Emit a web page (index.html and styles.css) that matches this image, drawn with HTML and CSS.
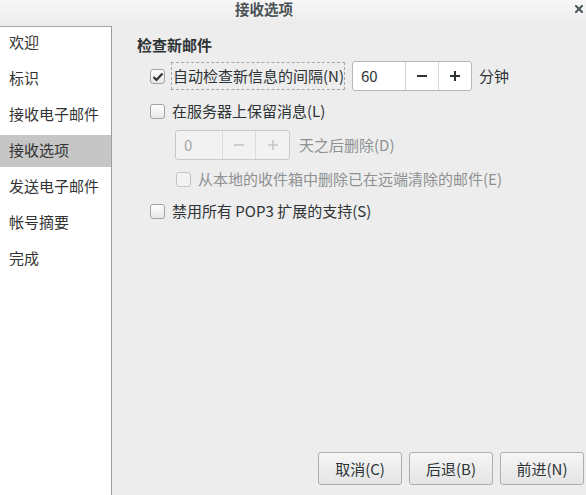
FILE: index.html
```html
<!DOCTYPE html>
<html lang="zh-CN">
<head>
<meta charset="utf-8">
<link rel="stylesheet" href="styles.css">
</head>
<body>
<div class="window">
  <div class="titlebar">
    <div class="title">接收选项</div>
    <svg class="close" width="8" height="8" viewBox="0 0 8 8"><path d="M1 1 L7 7 M7 1 L1 7" stroke="#4f5b5f" stroke-width="2.2" stroke-linecap="square"/></svg>
  </div>
  <div class="body">
    <div class="sidebar">
      <div class="item">欢迎</div>
      <div class="item">标识</div>
      <div class="item">接收电子邮件</div>
      <div class="item selected">接收选项</div>
      <div class="item">发送电子邮件</div>
      <div class="item">帐号摘要</div>
      <div class="item">完成</div>
    </div>
    <div class="main">
      <div class="content">
        <div class="heading">检查新邮件</div>
        <div class="row row1">
          <span class="check checked"><svg width="12" height="10" viewBox="0 0 12 10"><path d="M1.5 5 L4.5 8 L10.5 1.5" fill="none" stroke="#2e3436" stroke-width="2.2"/></svg></span>
          <span class="label focus">自动检查新信息的间隔(N)</span>
          <div class="spin">
            <div class="entry">60</div>
            <div class="sbtn"><svg width="12" height="12" viewBox="0 0 12 12"><path d="M1 6 H11" stroke="#2e3436" stroke-width="2"/></svg></div>
            <div class="sbtn"><svg width="12" height="12" viewBox="0 0 12 12"><path d="M1 6 H11 M6 1 V11" stroke="#2e3436" stroke-width="2"/></svg></div>
          </div>
          <span class="unit">分钟</span>
        </div>
        <div class="row row2">
          <span class="check"></span>
          <span class="label">在服务器上保留消息(L)</span>
        </div>
        <div class="row row3">
          <div class="spin disabled">
            <div class="entry">0</div>
            <div class="sbtn"><svg width="12" height="12" viewBox="0 0 12 12"><path d="M1 6 H11" stroke="#c4c6c6" stroke-width="1.6"/></svg></div>
            <div class="sbtn"><svg width="12" height="12" viewBox="0 0 12 12"><path d="M1 6 H11 M6 1 V11" stroke="#c4c6c6" stroke-width="1.6"/></svg></div>
          </div>
          <span class="unit dim">天之后删除(D)</span>
        </div>
        <div class="row row4">
          <span class="check dis"></span>
          <span class="label dim">从本地的收件箱中删除已在远端清除的邮件(E)</span>
        </div>
        <div class="row row5">
          <span class="check"></span>
          <span class="label">禁用所有 POP3 扩展的支持(S)</span>
        </div>
      </div>
      <div class="buttons">
        <button class="btn">取消(C)</button>
        <button class="btn">后退(B)</button>
        <button class="btn">前进(N)</button>
      </div>
    </div>
  </div>
</div>
</body>
</html>
```

FILE: styles.css
```css
html, body {
  margin: 0;
  padding: 0;
}
body {
  width: 586px;
  height: 495px;
  overflow: hidden;
  font-family: "Noto Sans CJK SC", "DejaVu Sans", sans-serif;
  font-size: 15px;
  color: #2e3436;
  background: #ededed;
}
.window {
  width: 586px;
  height: 495px;
  display: flex;
  flex-direction: column;
}
.titlebar {
  height: 26px;
  flex: none;
  background: linear-gradient(#f7f7f7, #ebebeb);
  display: flex;
  align-items: flex-start;
  justify-content: center;
  position: relative;
}
.title {
  font-weight: bold;
  font-size: 14.5px;
  line-height: 18px;
  color: #4a5255;
  margin-right: 58px;
}
.close {
  position: absolute;
  right: 3px;
  top: 5px;
}
.body {
  flex: 1;
  display: flex;
  min-height: 0;
}
.sidebar {
  width: 111px;
  flex: none;
  background: #fff;
  border-top: 1px solid #a3a3a3;
  border-right: 1px solid #9c9c9c;
  display: flex;
  flex-direction: column;
  gap: 4px;
}
.item {
  height: 32px;
  line-height: 30px;
  padding-left: 9px;
  color: #333;
  white-space: nowrap;
}
.item.selected {
  background: #c5c6c5;
}
.main {
  flex: 1;
  display: flex;
  flex-direction: column;
  justify-content: space-between;
}
.content {
  padding: 9px 0 0 25px;
  display: flex;
  flex-direction: column;
}
.heading {
  font-weight: bold;
  font-size: 15px;
  line-height: 20px;
}
.row {
  display: flex;
  align-items: center;
  white-space: nowrap;
}
.row1 { margin-top: 6px; height: 30px; padding-left: 13px; }
.row2 { margin-top: 10px; height: 20px; padding-left: 13px; }
.row3 { margin-top: 9px; height: 30px; padding-left: 38px; }
.row4 { margin-top: 9px; height: 20px; padding-left: 39px; }
.row5 { margin-top: 12px; height: 20px; padding-left: 13px; }
.check {
  width: 13px;
  height: 13px;
  border: 1px solid #a2a4a4;
  border-radius: 3px;
  background: linear-gradient(#ffffff, #e6e6e6);
  display: flex;
  align-items: center;
  justify-content: center;
  flex: none;
  margin-top: 1px;
}
.check.dis {
  border-color: #c3c5c5;
  background: #f2f2f2;
}
.label {
  margin-left: 7px;
  line-height: 18px;
}
.label.focus {
  border: 1px dashed #a8a8a8;
  padding: 4px 0 4px 1px;
  margin-left: 6px;
}
.dim {
  color: #8d9192;
}
.spin {
  display: flex;
  height: 28px;
  border: 1px solid #b6b8b8;
  border-radius: 3px;
  background: #fff;
  margin-left: 7px;
}
.row3 .spin { margin-left: 0; }
.entry {
  width: 44px;
  padding-left: 8px;
  line-height: 27px;
  font-size: 15px;
}
.sbtn {
  width: 32px;
  border-left: 1px solid #d6d8d8;
  display: flex;
  align-items: center;
  justify-content: center;
}
.spin.disabled {
  border-color: #c8caca;
  background: #f2f2f2;
}
.spin.disabled .entry {
  width: 38px;
  color: #a3a6a6;
}
.spin.disabled .sbtn {
  border-left-color: #dcdcdc;
}
.spin.disabled .sbtn:last-child { width: 33px; }
.unit {
  margin-left: 7px;
  line-height: 18px;
}
.row3 .unit { margin-left: 9px; }
.buttons {
  display: flex;
  justify-content: flex-end;
  gap: 7px;
  padding: 0 2px 10px 0;
}
.btn {
  width: 84px;
  height: 33px;
  border: 1px solid #adafaf;
  border-radius: 3px;
  background: linear-gradient(#f6f6f6, #e4e4e4);
  font-family: "Noto Sans CJK SC", "DejaVu Sans", sans-serif;
  font-size: 15px;
  line-height: 30px;
  color: #2e3436;
  padding: 0;
}
```
